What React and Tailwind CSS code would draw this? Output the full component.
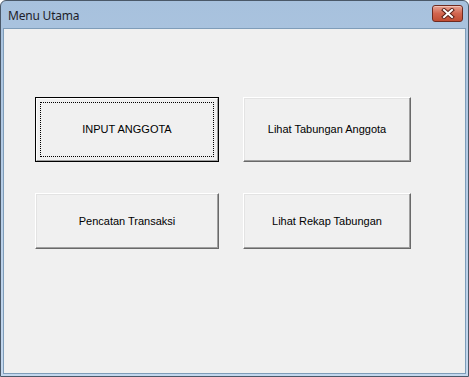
export default function App() {
  const btn =
    "flex items-center justify-center bg-[#f0f0f0] border border-t-white border-l-white border-b-[#696969] border-r-[#696969] shadow-[inset_-1px_-1px_0_#a0a0a0,inset_1px_1px_0_#e3e3e3] text-[11px] text-black";
  return (
    <div
      className="w-[469px] h-[377px] flex flex-col rounded-t-[6px] border border-[#4a5868] bg-gradient-to-b from-[#a7c1dd] via-[#b6cde6] to-[#c4d8ee] px-[2px] pb-[2px]"
      style={{ fontFamily: '"Liberation Sans", Arial, sans-serif' }}
    >
      <div className="h-[27px] flex items-center justify-between pl-[5px] pr-[3px] shrink-0">
        <span
          className="text-[12px] text-[#1e1e2a] pt-[2px] tracking-[-0.2px]"
          style={{ fontFamily: '"Noto Sans", "Open Sans", sans-serif' }}
        >
          Menu Utama
        </span>
        <div className="w-[31px] h-[17px] mt-[-3px] rounded-[3px] border border-[#6e2a20] bg-gradient-to-b from-[#e6a293] via-[#d2654f] to-[#c14d33] flex items-center justify-center shadow-[inset_0_1px_0_#f2c2b6]">
          <svg width="16" height="11" viewBox="0 0 16 11">
            <path d="M4 2 L12 9 M12 2 L4 9" stroke="#5a2018" strokeWidth="4" strokeLinecap="square" />
            <path d="M4 2 L12 9 M12 2 L4 9" stroke="#ffffff" strokeWidth="2" strokeLinecap="square" />
          </svg>
        </div>
      </div>
      <div className="flex-1 bg-[#f0f0f0] border border-[#7f9db9] pl-[31px] pt-[68px]">
        <div className="grid grid-cols-[184px_168px] grid-rows-[65px_56px] gap-x-[24px] gap-y-[31px]">
          <div className="border border-black flex">
            <div className="flex-1 flex p-[3px] bg-[#f0f0f0] border border-t-white border-l-white border-b-[#a0a0a0] border-r-[#a0a0a0]">
              <div className="flex-1 flex items-center justify-center border border-dotted border-black text-[11px] text-black">
                INPUT ANGGOTA
              </div>
            </div>
          </div>
          <div className={btn}>Lihat Tabungan Anggota</div>
          <div className={btn}>Pencatan Transaksi</div>
          <div className={btn}>Lihat Rekap Tabungan</div>
        </div>
      </div>
    </div>
  );
}
